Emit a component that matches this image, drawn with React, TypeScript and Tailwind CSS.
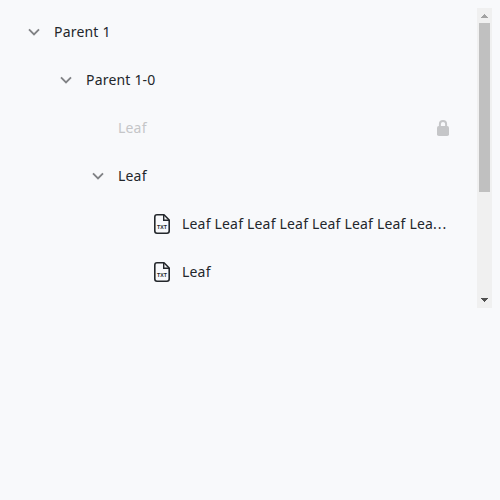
type Row = {
  label: string;
  indent: string;
  kind: "branch" | "locked" | "file";
  clipped?: boolean;
};

const rows: Row[] = [
  { label: "Parent 1", indent: "pl-4", kind: "branch" },
  { label: "Parent 1-0", indent: "pl-12", kind: "branch" },
  { label: "Leaf", indent: "pl-[110px]", kind: "locked" },
  { label: "Leaf", indent: "pl-20", kind: "branch" },
  {
    label: "Leaf Leaf Leaf Leaf Leaf Leaf Leaf Lea",
    indent: "pl-[142px]",
    kind: "file",
    clipped: true,
  },
  { label: "Leaf", indent: "pl-[142px]", kind: "file" },
];

function Chevron() {
  return (
    <svg className="mr-2.5 h-5 w-5 shrink-0" viewBox="0 0 20 20" fill="none">
      <path d="M5 7.3l5 5 5-5" stroke="#808285" strokeWidth="1.9" />
    </svg>
  );
}

function TxtFile() {
  return (
    <svg className="mr-2 h-6 w-6 shrink-0" viewBox="0 0 24 24" fill="none">
      <path
        d="M14 2.8H7C5.5 2.8 4.8 3.6 4.8 5V19C4.8 20.4 5.5 21.2 7 21.2H17C18.5 21.2 19.2 20.4 19.2 19V8Z"
        stroke="#23272b"
        strokeWidth="1.6"
        strokeLinejoin="round"
      />
      <path d="M13.7 3v5.3H19" stroke="#23272b" strokeWidth="1.4" />
      <text
        x="7.1"
        y="17.4"
        textLength="9.8"
        lengthAdjust="spacingAndGlyphs"
        className="fill-[#23272b] font-['Liberation_Sans',sans-serif] text-[5.6px] font-bold tracking-normal"
      >
        TXT
      </text>
    </svg>
  );
}

function Lock() {
  return (
    <svg className="h-6 w-6 shrink-0" viewBox="0 0 24 24" fill="none">
      <rect x="6" y="10" width="12" height="10" rx="1.8" fill="#c5c6c8" />
      <path d="M8.9 11V8a3.1 3.1 0 0 1 6.2 0v3" stroke="#c5c6c8" strokeWidth="2" />
    </svg>
  );
}

function TreeRow({ row }: { row: Row }) {
  return (
    <div className={`flex h-12 items-center pr-[22px] ${row.indent}`}>
      {row.kind === "branch" && <Chevron />}
      {row.kind === "file" && <TxtFile />}
      <span
        className={`min-w-0 flex-1 whitespace-nowrap ${
          row.kind === "locked" ? "text-[#c5c6c8]" : "text-[#23272b]"
        }`}
      >
        {row.label}
        {row.clipped && <span className="tracking-[1px]">...</span>}
      </span>
      {row.kind === "locked" && <Lock />}
    </div>
  );
}

function Scrollbar() {
  return (
    <div className="flex w-[15px] shrink-0 flex-col bg-[#f0f0f0]">
      <svg className="h-[15px] w-[15px]" viewBox="0 0 15 15" shapeRendering="crispEdges">
        <path d="M7 6h1v1h1v1h1v1h1v1H4V9h1V8h1V7h1Z" fill="#a2a2a2" />
      </svg>
      <div className="mx-0.5 h-[169px] bg-[#c0c0c0]" />
      <svg className="mt-auto h-[15px] w-[15px]" viewBox="0 0 15 15" shapeRendering="crispEdges">
        <path d="M4 5h7v1h-1v1H9v1H8v1H7V8H6V7H5V6H4Z" fill="#505050" />
      </svg>
    </div>
  );
}

export default function App() {
  return (
    <main className="h-screen overflow-hidden bg-[#f8f9fb] p-2 font-['Noto_Sans',sans-serif] text-sm tracking-[0.19px]">
      <div className="flex h-[300px]">
        <div className="min-w-0 flex-1">
          {rows.map((row, i) => (
            <TreeRow key={i} row={row} />
          ))}
        </div>
        <Scrollbar />
      </div>
    </main>
  );
}
